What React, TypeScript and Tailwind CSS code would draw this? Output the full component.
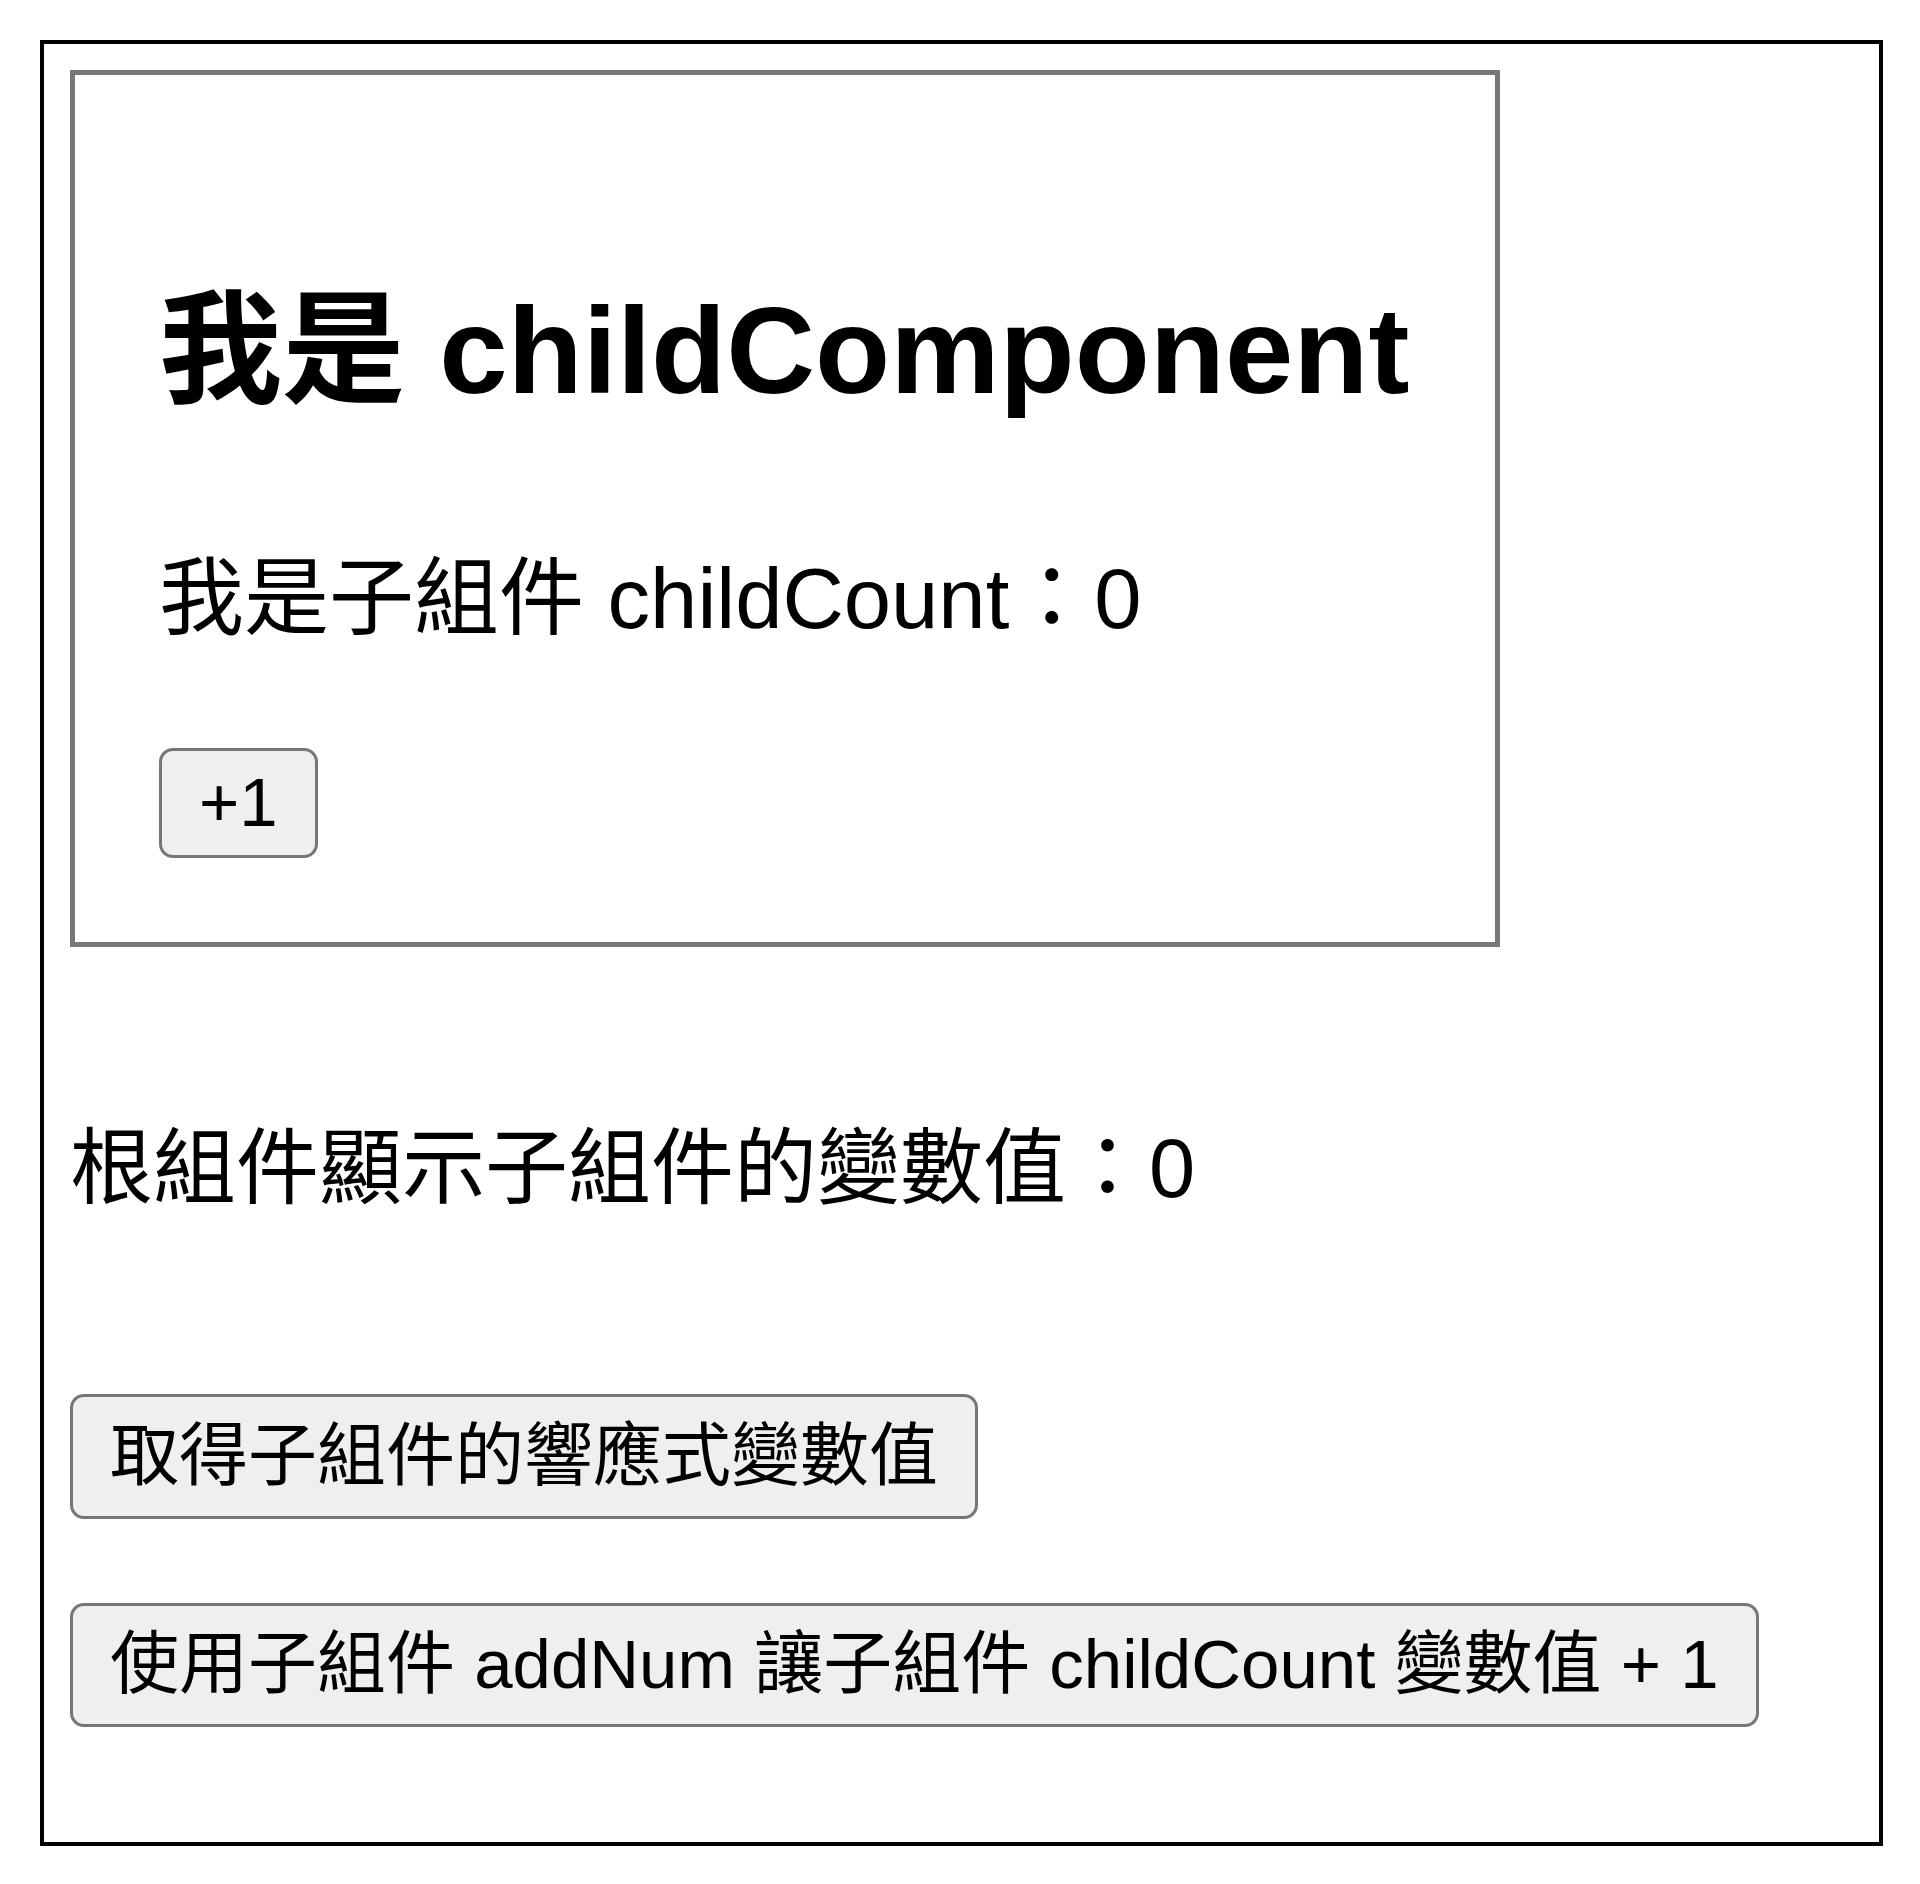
import { useImperativeHandle, useRef, useState, type Ref } from "react";

const font = "font-['Liberation_Sans','Noto_Sans_CJK_TC',sans-serif]";

const btn =
  "flex items-center rounded-[14px] border-[3px] border-[#767676] bg-[#efefef] px-[37px] text-[69px] leading-[80px] text-black";

type ChildHandle = {
  childCount: number;
  addNum: () => void;
};

function ChildComponent({ ref }: { ref: Ref<ChildHandle> }) {
  const [childCount, setChildCount] = useState(0);
  const addNum = () => setChildCount((n) => n + 1);

  useImperativeHandle(ref, () => ({ childCount, addNum }), [childCount]);

  return (
    <div className="flex w-[1430px] flex-col items-start border-[5px] border-[#777] pt-[206px] pb-[84px] pl-[84px]">
      <h2 className="text-[123px] font-bold leading-[140px]">我是 childComponent</h2>
      <p className="mt-[128px] text-[85px] leading-[100px]">我是子組件 childCount：{childCount}</p>
      <button type="button" onClick={addNum} className={`mt-[99px] h-[110px] ${btn}`}>
        +1
      </button>
    </div>
  );
}

export default function App() {
  const child = useRef<ChildHandle>(null);
  const [value, setValue] = useState(0);

  return (
    <div className={`min-h-screen bg-white pt-[40px] pl-[40px] text-black ${font}`}>
      <div className="flex w-[1843px] flex-col items-start border-4 border-black pt-[26px] pb-[115px] pl-[26px]">
        <ChildComponent ref={child} />
        <p className="mt-[172px] text-[83px] leading-[100px]">根組件顯示子組件的變數值：{value}</p>
        <button
          type="button"
          onClick={() => setValue(child.current?.childCount ?? 0)}
          className={`mt-[175px] h-[125px] ${btn}`}
        >
          取得子組件的響應式變數值
        </button>
        <button
          type="button"
          onClick={() => child.current?.addNum()}
          className={`mt-[84px] h-[124px] ${btn}`}
        >
          使用子組件 addNum 讓子組件 childCount 變數值 + 1
        </button>
      </div>
    </div>
  );
}
